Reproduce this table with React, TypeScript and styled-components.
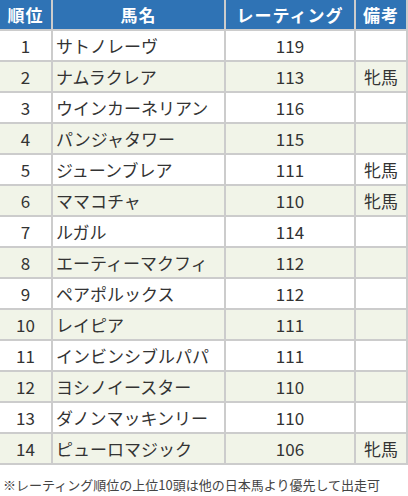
import React from 'react';
import styled, { createGlobalStyle } from 'styled-components';

const rows = [
  { rank: 1, name: 'サトノレーヴ', rating: 119, note: '' },
  { rank: 2, name: 'ナムラクレア', rating: 113, note: '牝馬' },
  { rank: 3, name: 'ウインカーネリアン', rating: 116, note: '' },
  { rank: 4, name: 'パンジャタワー', rating: 115, note: '' },
  { rank: 5, name: 'ジューンブレア', rating: 111, note: '牝馬' },
  { rank: 6, name: 'ママコチャ', rating: 110, note: '牝馬' },
  { rank: 7, name: 'ルガル', rating: 114, note: '' },
  { rank: 8, name: 'エーティーマクフィ', rating: 112, note: '' },
  { rank: 9, name: 'ペアポルックス', rating: 112, note: '' },
  { rank: 10, name: 'レイピア', rating: 111, note: '' },
  { rank: 11, name: 'インビンシブルパパ', rating: 111, note: '' },
  { rank: 12, name: 'ヨシノイースター', rating: 110, note: '' },
  { rank: 13, name: 'ダノンマッキンリー', rating: 110, note: '' },
  { rank: 14, name: 'ピューロマジック', rating: 106, note: '牝馬' },
];

const GlobalStyle = createGlobalStyle`
  body {
    margin: 0;
    background: #fff;
    font-family: "Noto Sans CJK JP", "Noto Sans", sans-serif;
    color: #333;
  }
`;

const Table = styled.div`
  display: grid;
  grid-template-columns: 51px 171px 128px 50px;
  grid-auto-rows: 29px;
  gap: 2px;
  padding: 0 2px 2px 0;
  background: #cccccc;
  width: 408px;
  box-sizing: border-box;
`;

const HeadCell = styled.div`
  background: #2f73b5;
  color: #fff;
  font-weight: bold;
  font-size: 17px;
  display: flex;
  align-items: center;
  justify-content: center;
  letter-spacing: 1px;
`;

const Cell = styled.div<{ $alt: boolean; $align?: string }>`
  background: ${(p) => (p.$alt ? '#f1f4e8' : '#ffffff')};
  font-size: 17px;
  display: flex;
  align-items: center;
  justify-content: ${(p) => p.$align || 'center'};
  padding: ${(p) => (p.$align === 'flex-start' ? '0 0 0 3px' : '0')};
  white-space: nowrap;
`;

const Note = styled.p`
  margin: 10px 0 0 3px;
  font-size: 13px;
  color: #444;
`;

export default function App() {
  return (
    <>
      <GlobalStyle />
      <Table>
        <HeadCell>順位</HeadCell>
        <HeadCell>馬名</HeadCell>
        <HeadCell>レーティング</HeadCell>
        <HeadCell>備考</HeadCell>
        {rows.map((r, i) => {
          const alt = i % 2 === 1;
          return (
            <React.Fragment key={r.rank}>
              <Cell $alt={alt}>{r.rank}</Cell>
              <Cell $alt={alt} $align="flex-start">{r.name}</Cell>
              <Cell $alt={alt}>{r.rating}</Cell>
              <Cell $alt={alt}>{r.note}</Cell>
            </React.Fragment>
          );
        })}
      </Table>
      <Note>※レーティング順位の上位10頭は他の日本馬より優先して出走可</Note>
    </>
  );
}
